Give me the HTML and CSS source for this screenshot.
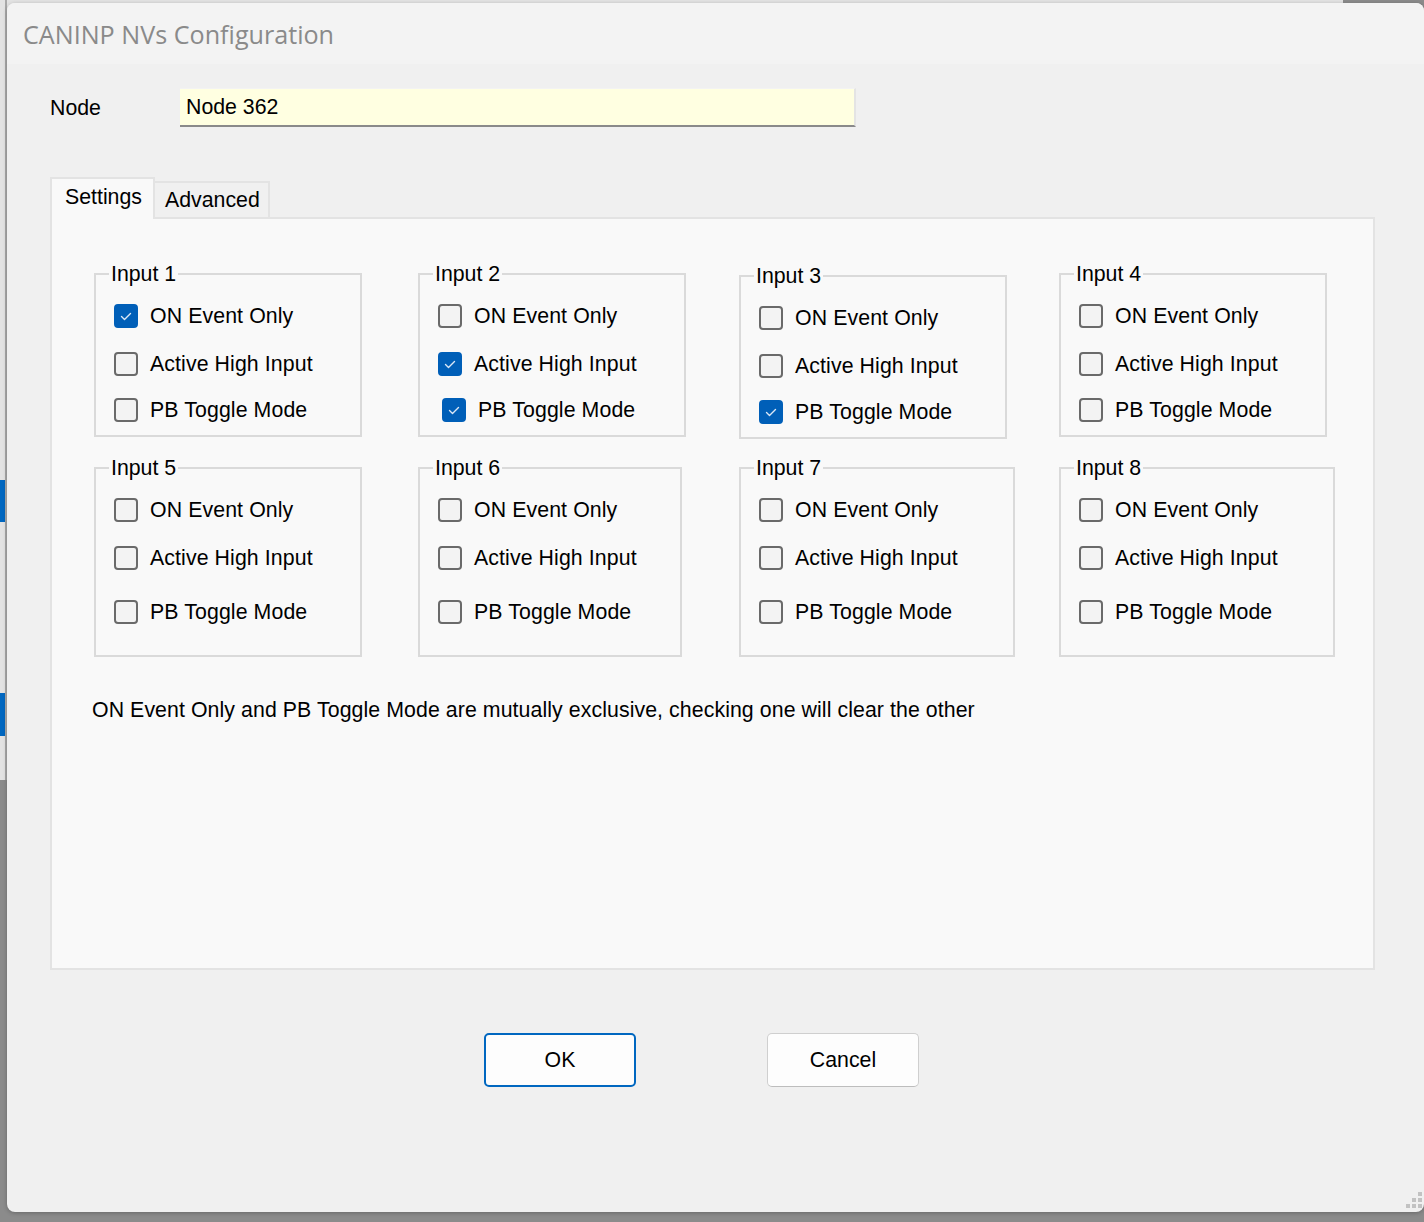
FILE: index.html
```html
<!DOCTYPE html>
<html>
<head>
<meta charset="utf-8">
<title>CANINP NVs Configuration</title>
<link rel="stylesheet" href="styles.css">
</head>
<body>
<div class="bgapp">
  <div class="bg-edge"></div>
  <div class="bg-sel bg-sel-1"></div>
  <div class="bg-sel bg-sel-2"></div>
</div>
<div class="window">
  <div class="titlebar"><span class="title">CANINP NVs Configuration</span></div>
  <div class="body">
    <div class="node-row">
      <span class="node-label">Node</span>
      <div class="node-input">Node 362</div>
    </div>
    <div class="tabs">
      <div class="tab active">Settings</div>
      <div class="tab">Advanced</div>
    </div>
    <div class="panel">
      <div class="groups">
        <div class="group short w268">
          <span class="legend">Input 1</span>
          <div class="check"><span class="box on"><svg viewBox="0 0 24 24"><polyline points="7.5,12.5 10.5,15.5 16.5,9.5"/></svg></span><span>ON Event Only</span></div>
          <div class="check"><span class="box"></span><span>Active High Input</span></div>
          <div class="check"><span class="box"></span><span>PB Toggle Mode</span></div>
        </div>
        <div class="group short w268">
          <span class="legend">Input 2</span>
          <div class="check"><span class="box"></span><span>ON Event Only</span></div>
          <div class="check"><span class="box on"><svg viewBox="0 0 24 24"><polyline points="7.5,12.5 10.5,15.5 16.5,9.5"/></svg></span><span>Active High Input</span></div>
          <div class="check shift"><span class="box on"><svg viewBox="0 0 24 24"><polyline points="7.5,12.5 10.5,15.5 16.5,9.5"/></svg></span><span>PB Toggle Mode</span></div>
        </div>
        <div class="group short w268 down">
          <span class="legend">Input 3</span>
          <div class="check"><span class="box"></span><span>ON Event Only</span></div>
          <div class="check"><span class="box"></span><span>Active High Input</span></div>
          <div class="check"><span class="box on"><svg viewBox="0 0 24 24"><polyline points="7.5,12.5 10.5,15.5 16.5,9.5"/></svg></span><span>PB Toggle Mode</span></div>
        </div>
        <div class="group short w268">
          <span class="legend">Input 4</span>
          <div class="check"><span class="box"></span><span>ON Event Only</span></div>
          <div class="check"><span class="box"></span><span>Active High Input</span></div>
          <div class="check"><span class="box"></span><span>PB Toggle Mode</span></div>
        </div>
        <div class="group tall w268">
          <span class="legend">Input 5</span>
          <div class="check"><span class="box"></span><span>ON Event Only</span></div>
          <div class="check"><span class="box"></span><span>Active High Input</span></div>
          <div class="check"><span class="box"></span><span>PB Toggle Mode</span></div>
        </div>
        <div class="group tall w264">
          <span class="legend">Input 6</span>
          <div class="check"><span class="box"></span><span>ON Event Only</span></div>
          <div class="check"><span class="box"></span><span>Active High Input</span></div>
          <div class="check"><span class="box"></span><span>PB Toggle Mode</span></div>
        </div>
        <div class="group tall w276">
          <span class="legend">Input 7</span>
          <div class="check"><span class="box"></span><span>ON Event Only</span></div>
          <div class="check"><span class="box"></span><span>Active High Input</span></div>
          <div class="check"><span class="box"></span><span>PB Toggle Mode</span></div>
        </div>
        <div class="group tall w276">
          <span class="legend">Input 8</span>
          <div class="check"><span class="box"></span><span>ON Event Only</span></div>
          <div class="check"><span class="box"></span><span>Active High Input</span></div>
          <div class="check"><span class="box"></span><span>PB Toggle Mode</span></div>
        </div>
      </div>
      <p class="note">ON Event Only and PB Toggle Mode are mutually exclusive, checking one will clear the other</p>
    </div>
    <div class="buttons">
      <button class="btn default">OK</button>
      <button class="btn">Cancel</button>
    </div>
  </div>
  <svg class="grip" width="16" height="16" viewBox="0 0 16 16">
    <rect x="12" y="0" width="4" height="4"/>
    <rect x="6" y="6" width="4" height="4"/>
    <rect x="12" y="6" width="4" height="4"/>
    <rect x="0" y="12" width="4" height="4"/>
    <rect x="6" y="12" width="4" height="4"/>
    <rect x="12" y="12" width="4" height="4"/>
  </svg>
</div>
</body>
</html>
```
FILE: styles.css
```css
html, body {
  margin: 0;
  padding: 0;
}
body {
  width: 1424px;
  height: 1222px;
  overflow: hidden;
  position: relative;
  background: #8b8b8b;
  font-family: "Liberation Sans", Arial, sans-serif;
  font-size: 21.3px;
  color: #000;
}
.bgapp {
  position: absolute;
  left: 0;
  top: 0;
  width: 1343px;
  height: 780px;
  background: #e3e3e3;
}
.bg-edge {
  position: absolute;
  left: 5px;
  top: 0;
  width: 2px;
  height: 780px;
  background: #a9a9a9;
}
.bg-sel {
  position: absolute;
  left: 0;
  width: 5px;
  background: #0067c0;
}
.bg-sel-1 { top: 480px; height: 42px; }
.bg-sel-2 { top: 693px; height: 43px; }

.window {
  position: absolute;
  left: 7px;
  top: 3px;
  width: 1417px;
  height: 1209px;
  background: #f0f0f0;
  border-radius: 8px;
  overflow: hidden;
  box-shadow: 0 1px 4px rgba(0,0,0,0.25);
}
.titlebar {
  height: 61px;
  background: #f3f3f3;
  display: flex;
  align-items: center;
  padding-left: 16px;
}
.title {
  font-family: "Open Sans", "Noto Sans", sans-serif;
  font-size: 25.15px;
  color: #8a8a8a;
  line-height: 34px;
}
.body {
  padding-left: 43px;
}
.node-row {
  margin-top: 24px;
  height: 39px;
  display: flex;
  align-items: center;
}
.node-label {
  width: 130px;
  line-height: 24px;
}
.node-input {
  width: 676px;
  height: 39px;
  box-sizing: border-box;
  background: #ffffe1;
  border-top: 1px solid #f3f3f3;
  border-right: 2px solid #e4e4e4;
  border-bottom: 2px solid #8a8a8a;
  padding-left: 6px;
  display: flex;
  align-items: center;
  line-height: 24px;
}
.tabs {
  margin-top: 50px;
  height: 40px;
  display: flex;
  align-items: flex-end;
}
.tab {
  box-sizing: border-box;
  height: 36px;
  width: 115px;
  padding-left: 10px;
  border: 2px solid #e3e3e3;
  border-bottom: none;
  border-left: none;
  background: #f0f0f0;
  display: flex;
  align-items: center;
  line-height: 24px;
}
.tab.active {
  width: 105px;
  height: 42px;
  margin-bottom: -2px;
  padding-left: 13px;
  padding-bottom: 4px;
  border-left: 2px solid #e3e3e3;
  background: #f9f9f9;
  position: relative;
  z-index: 1;
}
.panel {
  width: 1325px;
  height: 753px;
  box-sizing: border-box;
  border: 2px solid #e3e3e3;
  background: #f9f9f9;
  padding: 54px 0 0 42px;
}
.groups {
  display: grid;
  grid-template-columns: 324px 321px 320px auto;
  row-gap: 28px;
  align-items: start;
}
.group {
  position: relative;
  box-sizing: border-box;
  border: 2px solid #dadada;
  padding: 28px 0 0 18px;
}
.group.short { height: 164px; }
.group.tall { height: 190px; }
.group.down { margin-top: 2px; }
.w268 { width: 268px; }
.w264 { width: 264px; }
.w276 { width: 276px; }
.legend {
  position: absolute;
  top: -13px;
  left: 13px;
  padding: 0 2px;
  background: #f9f9f9;
  line-height: 24px;
  white-space: nowrap;
}
.check {
  height: 26px;
  display: flex;
  align-items: center;
  gap: 12px;
  line-height: 24px;
  white-space: nowrap;
  letter-spacing: 0.1px;
}
.check + .check { margin-top: 22px; }
.short .check:last-child { margin-top: 20px; }
.tall .check:last-child { margin-top: 28px; }
.check.shift { margin-left: 4px; }
.box {
  flex: none;
  width: 24px;
  height: 24px;
  box-sizing: border-box;
  border: 2px solid #6a6a6a;
  border-radius: 4px;
  background: #f3f3f3;
  display: block;
}
.box.on {
  background: #005fb8;
  border-color: #005fb8;
}
.box svg {
  display: block;
  width: 24px;
  height: 24px;
  margin: -2px;
}
.box svg polyline {
  fill: none;
  stroke: #dbe8f6;
  stroke-width: 1.4;
  stroke-linecap: round;
  stroke-linejoin: round;
}
.note {
  margin: 41px 0 0 -2px;
  line-height: 24px;
  white-space: nowrap;
  letter-spacing: 0.08px;
}
.buttons {
  margin-top: 63px;
  padding-left: 434px;
  display: flex;
  gap: 131px;
}
.btn {
  width: 152px;
  height: 54px;
  box-sizing: border-box;
  border: 1px solid #cfcfcf;
  border-bottom-color: #bdbdbd;
  border-radius: 5px;
  background: #fdfdfd;
  font-family: "Liberation Sans", Arial, sans-serif;
  font-size: 21.3px;
  color: #000;
  padding: 0;
}
.btn.default {
  border: 2px solid #0067c0;
}
.grip {
  position: absolute;
  right: 2px;
  bottom: 4px;
  fill: #c2c2c2;
}
```
